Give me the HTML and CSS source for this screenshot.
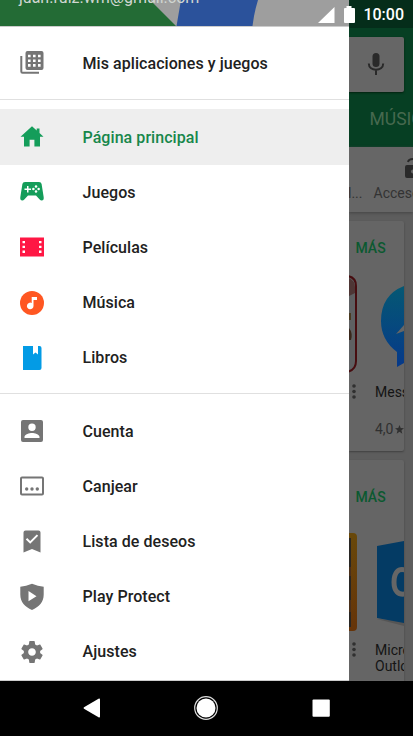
FILE: index.html
```
<!DOCTYPE html>
<html lang="es">
<head>
<meta charset="utf-8">
<title>Play Store</title>
<link rel="stylesheet" href="styles.css">
</head>
<body>
<div class="screen">
  <aside class="drawer">
    <header class="account">
      <svg class="account-art" width="349" height="26" viewBox="0 0 349 26"><path fill="#236b35" d="M0 0h349v26H0z"/><path fill="#9e9e9e" d="M150 0h199v26H176z"/><path fill="#2b529b" d="M181 0h77q-4 13-5.500 26H176.500z"/></svg>
      <span class="email">juan.ruiz.wm@gmail.com</span>
    </header>
    <nav class="menu">
      <div class="group top">
        <a class="item"><svg class="icon gray" viewBox="0 0 24 24"><path d="M2.300 5H.3v15.500q0 2.200 2.200 2.200H19v-2H2.300z"/><path fill-rule="evenodd" d="M7.500 0h14q2 0 2 2v15q0 2-2 2h-14q-2 0-2-2V2q0-2 2-2zM8 3.700v2.600h2.600V3.700zm5 0v2.600h2.600V3.700zm5 0v2.600h2.600V3.700zM8 8.400V11h2.600V8.400zm5 0V11h2.600V8.400zm5 0V11h2.600V8.400zM8 13.100v2.600h2.600v-2.600zm5 0v2.600h2.600v-2.600zm5 0v2.600h2.600v-2.600z"/></svg><span>Mis aplicaciones y juegos</span></a>
      </div>
      <div class="group main">
        <a class="item selected"><svg class="icon green" viewBox="0 0 24 24"><path d="M12 1.300 .5 11.700H4v9.800h5.600v-6.800h4.800v6.800H20v-9.800h3.500L19.500 8V3.500h-2.800v2z"/></svg><span>Página principal</span></a>
        <a class="item"><svg class="icon green" viewBox="0 0 24 24"><path d="M5 2h14q2.200 0 2.600 2l2.100 13.200q.3 3.300-2 3.300-1.200 0-2-1L16 15.500H8l-3.700 4q-.8 1-2 1-2.300 0-2-3.300L2.400 4q.4-2 2.600-2z"/><path fill="#fff" d="M7 6h1.500v2.500H11V10H8.500v2.500H7V10H4.500V8.500H7z"/><g fill="#fff"><circle cx="16" cy="6.400" r="1.250"/><circle cx="16" cy="11.600" r="1.250"/><circle cx="13.400" cy="9" r="1.250"/><circle cx="18.600" cy="9" r="1.250"/></g></svg><span>Juegos</span></a>
        <a class="item"><svg class="icon red" viewBox="0 0 24 24"><path fill-rule="evenodd" d="M0 2.500h24v19H0zM2.500 6v2.300H5V6zm0 4.700V13H5v-2.300zm0 4.900v2.300H5v-2.300zM19 6v2.300h2.500V6zm0 4.700V13h2.500v-2.300zm0 4.900v2.300h2.500v-2.300z"/></svg><span>Películas</span></a>
        <a class="item"><svg class="icon orange" viewBox="0 0 24 24"><circle cx="12" cy="12" r="12"/><path fill="#fff" d="M11.700 6H17v3h-3.500v6a3.300 3.300 0 1 1-1.800-3z"/></svg><span>Música</span></a>
        <a class="item"><svg class="icon blue" viewBox="0 0 24 24"><path d="M3 0h10v8.500l2.500-2 2.500 2V0h1.500q2 0 2 2v20q0 2-2 2H3z"/></svg><span>Libros</span></a>
      </div>
      <div class="group extra">
        <a class="item"><svg class="icon gray" viewBox="0 0 24 24"><path fill-rule="evenodd" d="M3 1h18q2 0 2 2v18q0 2-2 2H3q-2 0-2-2V3q0-2 2-2zm9 3.500a3.700 3.700 0 1 0 0 7.400 3.700 3.700 0 0 0 0-7.400zM4.500 19h15v-1.200c0-2.400-5-3.900-7.500-3.900s-7.500 1.500-7.500 3.900z"/></svg><span>Cuenta</span></a>
        <a class="item"><svg class="icon gray" viewBox="0 0 24 24"><path fill-rule="evenodd" d="M2 2.500h20q2 0 2 2v15q0 2-2 2H2q-2 0-2-2v-15q0-2 2-2zm0 2v15h20v-15z"/><circle cx="6.700" cy="15" r="1.700"/><circle cx="12" cy="15" r="1.700"/><circle cx="17.300" cy="15" r="1.700"/></svg><span>Canjear</span></a>
        <a class="item"><svg class="icon gray" viewBox="0 0 24 24"><path d="M5.500 .5h13q2 0 2 2v20L12 19 3.500 22.500v-20q0-2 2-2z"/><path fill="none" stroke="#fff" stroke-width="2" d="m6.500 8.700 3.700 3.700 7.300-7.300"/></svg><span>Lista de deseos</span></a>
        <a class="item"><svg class="icon gray" viewBox="0 0 24 24"><path fill-rule="evenodd" d="M12-1.200Q18 1.300 23.700 1.700v7.800C23.700 17 19 22 12 25 5 22 .3 17 .3 9.500V1.700Q6 1.300 12-1.200zM8.500 6v10.300l8-5.100z"/></svg><span>Play Protect</span></a>
        <a class="item"><svg class="icon gray" viewBox="1 1 22 22"><path d="M19.430 12.980c.04-.32.07-.64.07-.98s-.03-.66-.07-.98l2.110-1.650c.19-.15.24-.42.12-.64l-2-3.460c-.12-.22-.39-.3-.61-.22l-2.490 1c-.52-.4-1.080-.73-1.690-.98l-.38-2.650C14.460 2.180 14.250 2 14 2h-4c-.25 0-.46.18-.49.42l-.38 2.650c-.61.25-1.170.59-1.690.98l-2.490-1c-.23-.09-.49 0-.61.22l-2 3.460c-.13.22-.07.49.12.64l2.110 1.650c-.04.32-.07.65-.07.98s.03.66.07.98l-2.110 1.650c-.19.15-.24.42-.12.64l2 3.460c.12.22.39.3.61.22l2.490-1c.52.4 1.080.73 1.690.98l.38 2.650c.03.24.24.42.49.42h4c.25 0 .46-.18.49-.42l.38-2.650c.61-.25 1.170-.59 1.690-.98l2.490 1c.23.09.49 0 .61-.22l2-3.460c.12-.22.07-.49-.12-.64l-2.110-1.650zM12 15.500c-1.930 0-3.500-1.570-3.500-3.500s1.570-3.500 3.500-3.500 3.500 1.570 3.500 3.500-1.570 3.500-3.500 3.500z"/></svg><span>Ajustes</span></a>
      </div>
    </nav>
  </aside>

  <main class="store">
    <div class="toolbar">
      <div class="search"><svg width="18" height="24" viewBox="0 0 18 24"><rect x="5.500" y="0" width="7" height="14" rx="3.500" fill="#292929"/><path fill="none" stroke="#292929" stroke-width="2" d="M1.800 10.500c0 8.200 14.400 8.200 14.400 0M9 16.500V22"/></svg></div>
      <div class="tab">MÚSICA</div>
    </div>
    <div class="chips">
      <span class="chip-end">l...</span>
      <div class="chip"><svg width="24" height="20" viewBox="0 0 24 20"><path fill="#292929" fill-rule="evenodd" d="M2 7h20q2 0 2 2v9q0 2-2 2H2q-2 0-2-2V9q0-2 2-2zm6 4.500a2 2 0 1 0 0 4 2 2 0 0 0 0-4z"/><path fill="none" stroke="#292929" stroke-width="2" d="M3 4c1-4 9-4 9 0v3"/></svg><span>Accesorios</span></div>
    </div>
    <section class="card">
      <div class="more">MÁS</div>
      <div class="art"><svg width="55" height="98" viewBox="0 0 55 98"><defs><linearGradient id="sky" x2="0" y2="1"><stop stop-color="#055873"/><stop offset="1" stop-color="#06398a"/></linearGradient></defs><path fill="#5e6062" stroke="#470d10" stroke-width="2" d="M-10 1H-2q9 1 9 10v75q0 9-9 11h-8z"/><path fill="#4e3635" d="M0 3q6 3 6 9v6L0 21z"/><path fill="#4a3a20" d="M0 38h2v7H0z"/><path fill="#39271b" d="M0 53q4 5 2 12H0z"/><path fill="url(#sky)" d="M55 11Q32 20 32 46q0 19 16 31v15l7-4z"/><path fill="#666" d="m47 59 8-9v6z"/></svg></div>
      <div class="info"><svg class="dots" width="4" height="16" viewBox="0 0 4 16"><circle cx="2" cy="2" r="1.800"/><circle cx="2" cy="7.500" r="1.800"/><circle cx="2" cy="13" r="1.800"/></svg><div class="name">Messenger</div></div>
      <div class="rating">4,0<svg width="9" height="9" viewBox="0 0 24 24"><path d="m12 18 7.500 5-2.300-8.700L24 8.700l-8.700-.6L12 0 8.700 8.100 0 8.700l6.800 5.600L4.500 23z"/></svg></div>
    </section>
    <section class="card last">
      <div class="more">MÁS</div>
      <div class="art"><svg width="55" height="98" viewBox="0 0 55 98"><defs><linearGradient id="amber" x2="0" y2="1"><stop stop-color="#68480a"/><stop offset="1" stop-color="#663409"/></linearGradient></defs><path fill="url(#amber)" d="M0 0h4q4 0 4 4v90q0 4-4 4H0z"/><path fill="#292724" d="M0 5h2v89H0z"/><path fill="#49301c" d="M0 34h2v9H0zM0 67h2v12H0z"/><path fill="#555" d="m28 86 27 7v-5z"/><path fill="#043b64" d="m28 13 27-5v82l-27-5z"/><path fill="none" stroke="#666" stroke-width="5" d="M56 37c-7-2-11 3-11 12s4 13 11 12"/></svg></div>
      <div class="info"><svg class="dots" width="4" height="16" viewBox="0 0 4 16"><circle cx="2" cy="2" r="1.800"/><circle cx="2" cy="7.500" r="1.800"/><circle cx="2" cy="13" r="1.800"/></svg><div class="name">Microsoft<br>Outlook</div></div>
    </section>
  </main>

  <div class="status">
    <svg width="37" height="18" viewBox="0 0 37 18"><path fill="#fff" d="M0 17 16.500 1v16zM26 2h2.500V0h5v2H36q1 0 1 1v13q0 1-1 1H27q-1 0-1-1V3q0-1 1-1z"/></svg>
    <span>10:00</span>
  </div>
</div>
<footer class="navbar">
  <svg width="18" height="20" viewBox="0 0 18 20"><path fill="#fff" d="M1 9.200 15.500.8q1.500-.6 1.500.8v16.800q0 1.400-1.500.8L1 10.800q-1-.8 0-1.600z"/></svg>
  <svg width="24" height="24" viewBox="0 0 24 24"><circle cx="12" cy="12" r="11.300" fill="none" stroke="#ddd" stroke-width="1.200"/><circle cx="12" cy="12" r="9.500" fill="#fff"/></svg>
  <svg width="18" height="18" viewBox="0 0 18 18"><rect x=".5" y=".5" width="17.300" height="17.300" rx="1" fill="#fff"/></svg>
</footer>
</body>
</html>
```
FILE: styles.css
```
* { box-sizing: border-box; }
body {
  margin: 0;
  width: 413px;
  height: 736px;
  overflow: hidden;
  background: #000;
  font-family: Roboto, "Liberation Sans", sans-serif;
  color: #212121;
}
svg { display: block; flex: none; }
.screen {
  position: relative;
  display: flex;
  height: 681px;
  overflow: hidden;
}
.drawer {
  width: 349px;
  flex: none;
  background: #fff;
  border-bottom: 1px solid #ccc;
}
.account {
  position: relative;
  height: 27px;
  overflow: hidden;
  border-bottom: 1px solid #ccc;
}
.account-art { position: absolute; left: 0; top: 0; }
.email {
  position: absolute;
  left: 19px;
  top: -12px;
  font-size: 16px;
  line-height: 20px;
  color: #d0d6d1;
  white-space: nowrap;
}
.group.top { padding: 8.500px 0 8.500px; border-bottom: 1px solid #e0e0e0; }
.group.main { padding: 9.300px 0 7.700px; border-bottom: 1px solid #e0e0e0; }
.group.extra { padding-top: 9.500px; }
.item {
  display: flex;
  align-items: center;
  height: 55.200px;
  padding-left: 20px;
  font-size: 16px;
  font-weight: 500;
  letter-spacing: .06px;
  white-space: nowrap;
}
.icon { width: 24px; height: 24px; margin-right: 38.500px; overflow: visible; }
.selected { background: #eee; color: #17874b; }
.selected span { padding-top: 1px; }
.gray { fill: #757575; }
.green { fill: #149d5a; }
.red { fill: #ff1744; }
.orange { fill: #ff5722; }
.blue { fill: #039be5; }

.store {
  width: 64px;
  flex: none;
  overflow: hidden;
  background: #5d5d5d;
}
.toolbar {
  height: 147px;
  padding-top: 9px;
  background: #063f23;
  border-top: 28px solid #052d1a;
}
.search {
  display: flex;
  align-items: center;
  justify-content: flex-end;
  width: 55px;
  height: 55px;
  padding-right: 19px;
  background: #666;
  border-radius: 0 2px 2px 0;
  box-shadow: 0 1px 2px #03220f;
}
.tab {
  margin: 15px 0 0 20.500px;
  font-size: 17.500px;
  line-height: 24px;
  color: #46694f;
}
.chips {
  display: flex;
  align-items: flex-end;
  height: 65px;
  padding-bottom: 10px;
  background: #666;
  box-shadow: 0 1px 3px #444;
  font-size: 14px;
  line-height: 18px;
  color: #333;
}
.chip-end { width: 25.500px; flex: none; margin-left: -1px; }
.chip { flex: none; }
.chip svg { margin: 0 0 6px 31.500px; }
.card {
  width: 55px;
  height: 230px;
  margin-top: 9px;
  overflow: hidden;
  background: #656565;
  border-radius: 0 2px 2px 0;
  box-shadow: 0 1px 2px #404040;
}
.more {
  margin: 17px 0 17px 6.500px;
  font-size: 14px;
  font-weight: 500;
  line-height: 20px;
  color: #0b5930;
}
.info { display: flex; height: 34px; margin-top: 11px; }
.dots { margin: 0 19px 0 3px; fill: #303030; }
.name { font-size: 14px; line-height: 16px; color: #141414; white-space: nowrap; }
.rating {
  display: flex;
  align-items: center;
  gap: 1px;
  margin: 2px 0 0 26px;
  font-size: 14px;
  line-height: 18px;
  color: #303030;
}
.rating svg { fill: #303030; }
.last { height: 235px; }
.last .more { margin-top: 27px; margin-bottom: 26px; }

.status {
  position: absolute;
  right: 9px;
  top: 5px;
  display: flex;
  align-items: center;
  gap: 8px;
  font-size: 16px;
  font-weight: 500;
  line-height: 20px;
  color: #fff;
}
.navbar {
  display: flex;
  align-items: center;
  justify-content: space-between;
  height: 55px;
  padding: 0 83.500px 1px 82.500px;
}
```
